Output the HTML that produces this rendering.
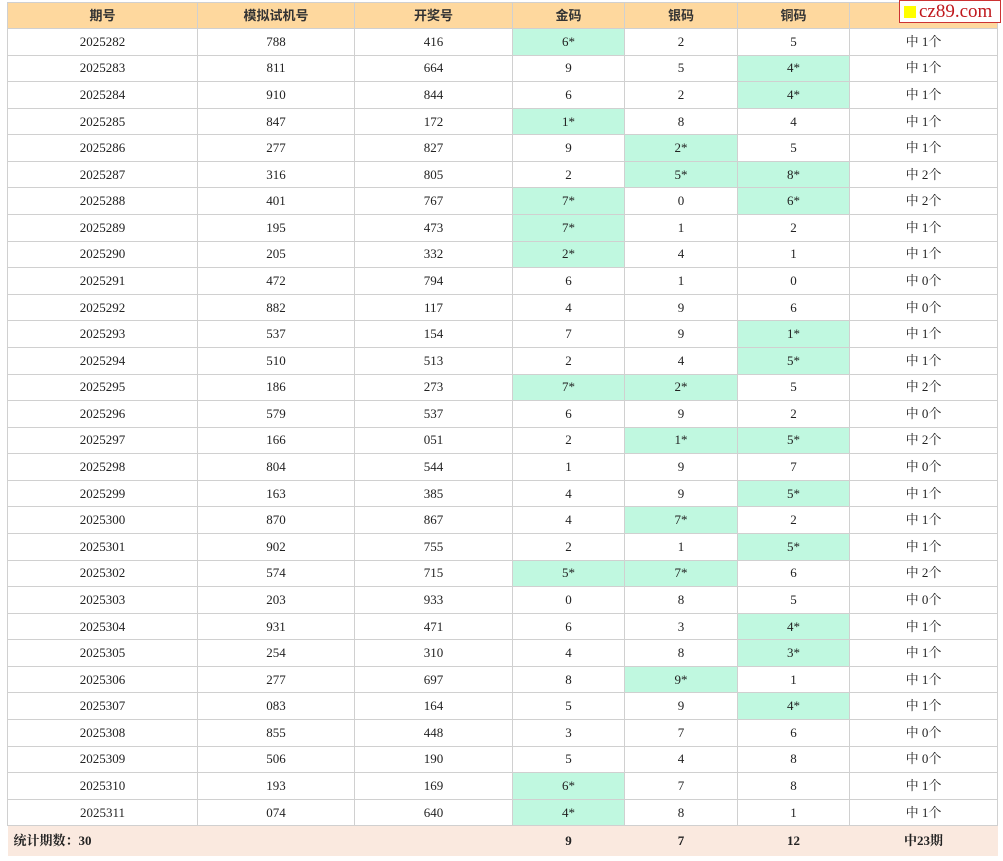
<!DOCTYPE html>
<html><head><meta charset="utf-8"><style>
body{margin:0;background:#fff;width:1003px;height:861px;overflow:hidden;position:relative}
table{position:absolute;left:7px;top:2px;border-collapse:collapse;table-layout:fixed;width:990px;font-family:"Liberation Serif","Noto Serif CJK SC",serif;font-size:13px;color:#222}
td,th{border:1px solid #d0d0d0;text-align:center;padding:0;height:25.58px;line-height:14px}
th{background:#fed89e;font-family:"Liberation Sans","Noto Sans CJK SC",sans-serif;font-weight:bold;font-size:13px;height:25px;color:#333}
td.g{background:#c0f8e0}
tr.f td{background:#fae9df;border:none;font-weight:bold;height:30px;color:#222}
tr.f td.l{text-align:left;padding-left:6px}
.logo{position:absolute;left:899px;top:0;width:100px;height:21px;background:#fff;border:1px solid #c33;font-family:"Liberation Serif",serif;font-size:19px;color:#c0181d;line-height:21px;white-space:nowrap;overflow:hidden}
.logo i{display:inline-block;width:12px;height:12px;background:#ff0;margin:0 3px 0 4px;vertical-align:-1px}
</style></head><body>
<table>
<colgroup><col style="width:190px"><col style="width:157px"><col style="width:158px"><col style="width:112px"><col style="width:113px"><col style="width:112px"><col style="width:148px"></colgroup>
<tr><th>期号</th><th>模拟试机号</th><th>开奖号</th><th>金码</th><th>银码</th><th>铜码</th><th></th></tr>
<tr><td>2025282</td><td>788</td><td>416</td><td class="g">6*</td><td>2</td><td>5</td><td>中 1个</td></tr>
<tr><td>2025283</td><td>811</td><td>664</td><td>9</td><td>5</td><td class="g">4*</td><td>中 1个</td></tr>
<tr><td>2025284</td><td>910</td><td>844</td><td>6</td><td>2</td><td class="g">4*</td><td>中 1个</td></tr>
<tr><td>2025285</td><td>847</td><td>172</td><td class="g">1*</td><td>8</td><td>4</td><td>中 1个</td></tr>
<tr><td>2025286</td><td>277</td><td>827</td><td>9</td><td class="g">2*</td><td>5</td><td>中 1个</td></tr>
<tr><td>2025287</td><td>316</td><td>805</td><td>2</td><td class="g">5*</td><td class="g">8*</td><td>中 2个</td></tr>
<tr><td>2025288</td><td>401</td><td>767</td><td class="g">7*</td><td>0</td><td class="g">6*</td><td>中 2个</td></tr>
<tr><td>2025289</td><td>195</td><td>473</td><td class="g">7*</td><td>1</td><td>2</td><td>中 1个</td></tr>
<tr><td>2025290</td><td>205</td><td>332</td><td class="g">2*</td><td>4</td><td>1</td><td>中 1个</td></tr>
<tr><td>2025291</td><td>472</td><td>794</td><td>6</td><td>1</td><td>0</td><td>中 0个</td></tr>
<tr><td>2025292</td><td>882</td><td>117</td><td>4</td><td>9</td><td>6</td><td>中 0个</td></tr>
<tr><td>2025293</td><td>537</td><td>154</td><td>7</td><td>9</td><td class="g">1*</td><td>中 1个</td></tr>
<tr><td>2025294</td><td>510</td><td>513</td><td>2</td><td>4</td><td class="g">5*</td><td>中 1个</td></tr>
<tr><td>2025295</td><td>186</td><td>273</td><td class="g">7*</td><td class="g">2*</td><td>5</td><td>中 2个</td></tr>
<tr><td>2025296</td><td>579</td><td>537</td><td>6</td><td>9</td><td>2</td><td>中 0个</td></tr>
<tr><td>2025297</td><td>166</td><td>051</td><td>2</td><td class="g">1*</td><td class="g">5*</td><td>中 2个</td></tr>
<tr><td>2025298</td><td>804</td><td>544</td><td>1</td><td>9</td><td>7</td><td>中 0个</td></tr>
<tr><td>2025299</td><td>163</td><td>385</td><td>4</td><td>9</td><td class="g">5*</td><td>中 1个</td></tr>
<tr><td>2025300</td><td>870</td><td>867</td><td>4</td><td class="g">7*</td><td>2</td><td>中 1个</td></tr>
<tr><td>2025301</td><td>902</td><td>755</td><td>2</td><td>1</td><td class="g">5*</td><td>中 1个</td></tr>
<tr><td>2025302</td><td>574</td><td>715</td><td class="g">5*</td><td class="g">7*</td><td>6</td><td>中 2个</td></tr>
<tr><td>2025303</td><td>203</td><td>933</td><td>0</td><td>8</td><td>5</td><td>中 0个</td></tr>
<tr><td>2025304</td><td>931</td><td>471</td><td>6</td><td>3</td><td class="g">4*</td><td>中 1个</td></tr>
<tr><td>2025305</td><td>254</td><td>310</td><td>4</td><td>8</td><td class="g">3*</td><td>中 1个</td></tr>
<tr><td>2025306</td><td>277</td><td>697</td><td>8</td><td class="g">9*</td><td>1</td><td>中 1个</td></tr>
<tr><td>2025307</td><td>083</td><td>164</td><td>5</td><td>9</td><td class="g">4*</td><td>中 1个</td></tr>
<tr><td>2025308</td><td>855</td><td>448</td><td>3</td><td>7</td><td>6</td><td>中 0个</td></tr>
<tr><td>2025309</td><td>506</td><td>190</td><td>5</td><td>4</td><td>8</td><td>中 0个</td></tr>
<tr><td>2025310</td><td>193</td><td>169</td><td class="g">6*</td><td>7</td><td>8</td><td>中 1个</td></tr>
<tr><td>2025311</td><td>074</td><td>640</td><td class="g">4*</td><td>8</td><td>1</td><td>中 1个</td></tr>
<tr class="f"><td class="l">统计期数：30</td><td></td><td></td><td>9</td><td>7</td><td>12</td><td>中23期</td></tr>
</table>
<div class="logo"><i></i>cz89.com</div>
</body></html>
